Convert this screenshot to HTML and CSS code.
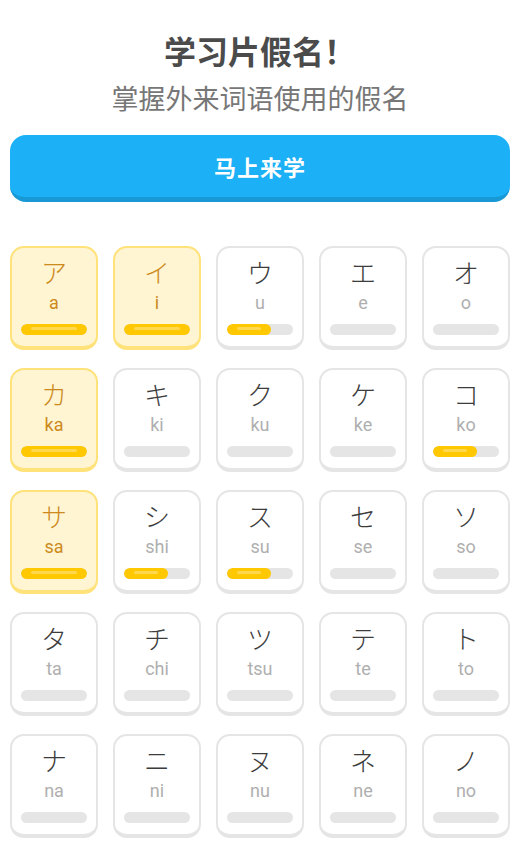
FILE: index.html
```html
<!DOCTYPE html>
<html lang="zh-CN">
<head>
  <meta charset="UTF-8">
  <meta name="viewport" content="width=device-width, initial-scale=1.0">
  <title>学习片假名</title>
  <link rel="stylesheet" href="styles.css">
</head>
<body>
  <div class="page">
    <h1 class="title">学习片假名！</h1>
    <p class="subtitle">掌握外来词语使用的假名</p>
    <button class="btn">马上来学</button>

    <div class="kana-grid">
      <div class="card gold"><span class="kana">ア</span><span class="roma">a</span><div class="bar"><div class="fill" style="width: 100%"></div></div></div>
      <div class="card gold"><span class="kana">イ</span><span class="roma">i</span><div class="bar"><div class="fill" style="width: 100%"></div></div></div>
      <div class="card"><span class="kana">ウ</span><span class="roma">u</span><div class="bar"><div class="fill" style="width: 66%"></div></div></div>
      <div class="card"><span class="kana">エ</span><span class="roma">e</span><div class="bar"></div></div>
      <div class="card"><span class="kana">オ</span><span class="roma">o</span><div class="bar"></div></div>

      <div class="card gold"><span class="kana">カ</span><span class="roma">ka</span><div class="bar"><div class="fill" style="width: 100%"></div></div></div>
      <div class="card"><span class="kana">キ</span><span class="roma">ki</span><div class="bar"></div></div>
      <div class="card"><span class="kana">ク</span><span class="roma">ku</span><div class="bar"></div></div>
      <div class="card"><span class="kana">ケ</span><span class="roma">ke</span><div class="bar"></div></div>
      <div class="card"><span class="kana">コ</span><span class="roma">ko</span><div class="bar"><div class="fill" style="width: 66%"></div></div></div>

      <div class="card gold"><span class="kana">サ</span><span class="roma">sa</span><div class="bar"><div class="fill" style="width: 100%"></div></div></div>
      <div class="card"><span class="kana">シ</span><span class="roma">shi</span><div class="bar"><div class="fill" style="width: 66%"></div></div></div>
      <div class="card"><span class="kana">ス</span><span class="roma">su</span><div class="bar"><div class="fill" style="width: 66%"></div></div></div>
      <div class="card"><span class="kana">セ</span><span class="roma">se</span><div class="bar"></div></div>
      <div class="card"><span class="kana">ソ</span><span class="roma">so</span><div class="bar"></div></div>

      <div class="card"><span class="kana">タ</span><span class="roma">ta</span><div class="bar"></div></div>
      <div class="card"><span class="kana">チ</span><span class="roma">chi</span><div class="bar"></div></div>
      <div class="card"><span class="kana">ツ</span><span class="roma">tsu</span><div class="bar"></div></div>
      <div class="card"><span class="kana">テ</span><span class="roma">te</span><div class="bar"></div></div>
      <div class="card"><span class="kana">ト</span><span class="roma">to</span><div class="bar"></div></div>

      <div class="card"><span class="kana">ナ</span><span class="roma">na</span><div class="bar"></div></div>
      <div class="card"><span class="kana">ニ</span><span class="roma">ni</span><div class="bar"></div></div>
      <div class="card"><span class="kana">ヌ</span><span class="roma">nu</span><div class="bar"></div></div>
      <div class="card"><span class="kana">ネ</span><span class="roma">ne</span><div class="bar"></div></div>
      <div class="card"><span class="kana">ノ</span><span class="roma">no</span><div class="bar"></div></div>
    </div>
  </div>
</body>
</html>
```

FILE: styles.css
```css
* {
  margin: 0;
  padding: 0;
  box-sizing: border-box;
}

body {
  font-family: 'Noto Sans CJK SC', 'Noto Sans', sans-serif;
  background: #fff;
  color: #4b4b4b;
  overflow: hidden;
}

.page {
  width: 500px;
  margin-left: 10px;
  padding-top: 29px;
  text-align: center;
}

.title {
  font-size: 32px;
  line-height: 42px;
  font-weight: 700;
  color: #4b4b4b;
}

.subtitle {
  margin-top: 9px;
  font-size: 27px;
  line-height: 36px;
  color: #777;
}

.btn {
  display: block;
  width: 100%;
  height: 67px;
  margin-top: 19px;
  border: none;
  border-bottom: 5px solid #1899d6;
  border-radius: 16px;
  background: #1cb0f6;
  color: #fff;
  font-family: 'Noto Sans CJK SC', sans-serif;
  font-size: 22px;
  font-weight: 700;
  letter-spacing: 1px;
}

.kana-grid {
  margin-top: 44px;
  display: grid;
  grid-template-columns: repeat(5, 88px);
  column-gap: 15px;
  row-gap: 18px;
}

.card {
  height: 104px;
  border: 2px solid #e5e5e5;
  border-bottom-width: 4px;
  border-radius: 14px;
  background: #fff;
  display: flex;
  flex-direction: column;
  align-items: center;
  padding: 8px 9px 0;
}

.kana {
  font-family: 'Noto Sans CJK JP', sans-serif;
  font-size: 26px;
  font-weight: 300;
  line-height: 32px;
  color: #3c3c3c;
}

.roma {
  margin-top: 5px;
  font-family: 'Roboto', 'Noto Sans', sans-serif;
  font-size: 18px;
  line-height: 20px;
  color: #afafaf;
}

.bar {
  margin-top: 11px;
  width: 100%;
  height: 11px;
  border-radius: 6px;
  background: #e5e5e5;
  overflow: hidden;
}

.fill {
  position: relative;
  height: 100%;
  border-radius: 6px;
  background: #ffc800;
}

.fill::after {
  content: "";
  position: absolute;
  top: 3px;
  left: 10px;
  right: 10px;
  height: 3px;
  border-radius: 2px;
  background: rgba(255, 255, 255, 0.3);
}

.card.gold {
  background: #fff5d3;
  border-color: #ffe27a;
}

.card.gold .kana,
.card.gold .roma {
  color: #cd8a1c;
}
```
